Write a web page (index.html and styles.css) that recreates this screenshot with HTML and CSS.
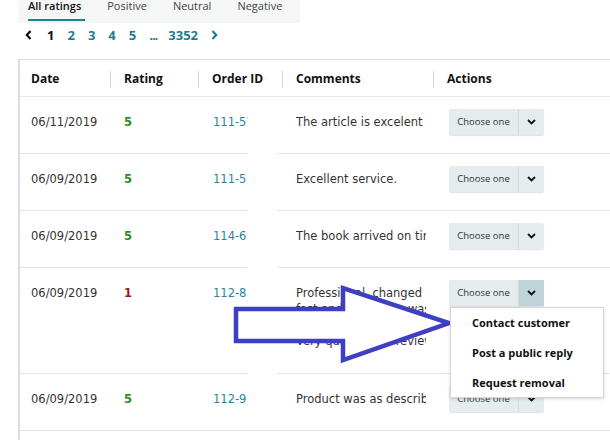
FILE: index.html
```html
<!DOCTYPE html>
<html lang="en">
<head>
    <meta charset="UTF-8">
    <title>Feedback Manager</title>
    <link rel="stylesheet" href="styles.css">
</head>
<body>
    <div class="page">
        <div class="tabs">
            <div class="tab active">All ratings</div>
            <div class="tab">Positive</div>
            <div class="tab">Neutral</div>
            <div class="tab">Negative</div>
        </div>

        <div class="pager">
            <span class="nav"><svg width="7" height="10" viewBox="0 0 7 10"><path d="M5.5 1 L1.8 5 L5.5 9" fill="none" stroke="#111" stroke-width="2.2"/></svg></span>
            <span class="current">1</span>
            <span>2</span>
            <span>3</span>
            <span>4</span>
            <span>5</span>
            <span class="dots">...</span>
            <span>3352</span>
            <span class="nav"><svg width="7" height="10" viewBox="0 0 7 10"><path d="M1.5 1 L5.2 5 L1.5 9" fill="none" stroke="#1c7d92" stroke-width="2.2"/></svg></span>
        </div>

        <div class="grid">
            <div class="row head">
                <div class="cell">Date</div>
                <div class="cell sep">Rating</div>
                <div class="cell sep">Order ID</div>
                <div class="cell sep">Comments</div>
                <div class="cell sep">Actions</div>
            </div>

            <div class="row">
                <div class="cell">06/11/2019</div>
                <div class="cell good">5</div>
                <div class="cell order"><span class="id">111-5706342</span></div>
                <div class="cell comment"><div class="line">The article is excelent</div></div>
                <div class="cell action">
                    <div class="select"><span class="label">Choose one</span><span class="caret"><svg width="9" height="6" viewBox="0 0 9 6"><path d="M1 1 L4.5 4.5 L8 1" fill="none" stroke="#111" stroke-width="1.8"/></svg></span></div>
                </div>
            </div>

            <div class="row">
                <div class="cell">06/09/2019</div>
                <div class="cell good">5</div>
                <div class="cell order"><span class="id">111-5983120</span></div>
                <div class="cell comment"><div class="line">Excellent service.</div></div>
                <div class="cell action">
                    <div class="select"><span class="label">Choose one</span><span class="caret"><svg width="9" height="6" viewBox="0 0 9 6"><path d="M1 1 L4.5 4.5 L8 1" fill="none" stroke="#111" stroke-width="1.8"/></svg></span></div>
                </div>
            </div>

            <div class="row">
                <div class="cell">06/09/2019</div>
                <div class="cell good">5</div>
                <div class="cell order"><span class="id">114-6620187</span></div>
                <div class="cell comment"><div class="line">The book arrived on time</div></div>
                <div class="cell action">
                    <div class="select"><span class="label">Choose one</span><span class="caret"><svg width="9" height="6" viewBox="0 0 9 6"><path d="M1 1 L4.5 4.5 L8 1" fill="none" stroke="#111" stroke-width="1.8"/></svg></span></div>
                </div>
            </div>

            <div class="row tall">
                <div class="cell">06/09/2019</div>
                <div class="cell bad">1</div>
                <div class="cell order"><span class="id">112-8841536</span></div>
                <div class="cell comment">
                    <div class="line">Professional, changed the item</div>
                    <div class="line">fast and the return was easy</div>
                    <div class="line">thank you for all the help</div>
                    <div class="line">Very quick, good review,&amp;</div>
                </div>
                <div class="cell action">
                    <div class="select open"><span class="label">Choose one</span><span class="caret"><svg width="9" height="6" viewBox="0 0 9 6"><path d="M1 1 L4.5 4.5 L8 1" fill="none" stroke="#111" stroke-width="1.8"/></svg></span></div>
                    <div class="menu">
                        <div class="item">Contact customer</div>
                        <div class="item">Post a public reply</div>
                        <div class="item">Request removal</div>
                    </div>
                </div>
            </div>

            <div class="row">
                <div class="cell">06/09/2019</div>
                <div class="cell good">5</div>
                <div class="cell order"><span class="id">112-9.</span></div>
                <div class="cell comment"><div class="line">Product was as described</div></div>
                <div class="cell action">
                    <div class="select"><span class="label">Choose one</span><span class="caret"><svg width="9" height="6" viewBox="0 0 9 6"><path d="M1 1 L4.5 4.5 L8 1" fill="none" stroke="#111" stroke-width="1.8"/></svg></span></div>
                </div>
            </div>

            <div class="row">
                <div class="cell">06/08/2019</div>
                <div class="cell good">5</div>
                <div class="cell order"><span class="id">113-4</span></div>
                <div class="cell comment"><div class="line">Great seller</div></div>
                <div class="cell action"></div>
            </div>
        </div>
    </div>

    <!-- tapa blanca sobre los IDs -->
    <div class="blank"></div>

    <svg class="arrow" width="610" height="440" viewBox="0 0 610 440">
        <polygon points="236,309 343,309 343,288 449,323 343,360 343,341 236,341" fill="#fff" stroke="#3f3fc6" stroke-width="4.5" stroke-linejoin="miter"/>
    </svg>
</body>
</html>
```

FILE: styles.css
```css
html,
body {
    margin: 0;
    padding: 0;
    overflow: hidden;
}

body {
    font-family: "DejaVu Sans", Verdana, sans-serif;
    font-size: 11.5px;
    color: #333;
    background-color: #fff;
    width: 610px;
    height: 440px;
    position: relative;
}

.page {
    padding-left: 18px;
}

.tabs {
    display: flex;
    gap: 22px;
    width: 282px;
    height: 23px;
    padding-left: 10px;
    background-color: #f5f6f6;
    font-family: "Open Sans", sans-serif;
    font-size: 11px;
    color: #444;
    box-sizing: border-box;
}

.tab {
    line-height: 12px;
    padding-right: 4px;
    height: 21px;
    box-sizing: border-box;
}

.tab.active {
    color: #111;
    font-weight: 600;
    border-bottom: 2px solid #1a8194;
}

.pager {
    display: flex;
    align-items: center;
    gap: 13px;
    height: 22px;
    margin-top: 1px;
    padding-left: 7px;
    font-family: "Open Sans", sans-serif;
    font-size: 13px;
    font-weight: 700;
    color: #1c7d92;
}

.pager .nav {
    display: flex;
    margin-right: 2px;
}

.pager .nav:last-child {
    margin-left: 0;
}

.pager .current {
    color: #111;
}

.pager .dots {
    letter-spacing: -1px;
    margin-right: -2px;
}

.grid {
    margin-top: 13px;
    border-left: 2px solid #ddd;
    border-top: 1px solid #ddd;
}

.row {
    display: grid;
    grid-template-columns: 90px 88px 84px 151px 1fr;
    border-bottom: 1px solid #e4e4e4;
    min-height: 56px;
}

.row.head {
    min-height: 36px;
    border-bottom: 1px solid #e8e8e8;
    font-family: "Open Sans", sans-serif;
    font-size: 12px;
    font-weight: 700;
    color: #111;
}

.row.head .cell {
    padding: 2px 0 0 14px;
    line-height: 34px;
}

.row.head .cell:first-child {
    padding-left: 11px;
}

.row.head .sep {
    background: linear-gradient(#d4d4d4, #d4d4d4) 0 11px / 1px 16px no-repeat;
}

.cell {
    padding: 17px 0 0 14px;
    line-height: 16px;
}

.row .cell:first-child {
    padding-left: 11px;
}

.good {
    color: #2c8c2c;
    font-weight: bold;
}

.bad {
    color: #a0141e;
    font-weight: bold;
}

.order {
    color: #2a86a0;
    padding-left: 15px;
}

.order .id {
    display: block;
    width: 35px;
    white-space: nowrap;
    overflow: hidden;
}

.comment {
    padding-right: 7px;
    padding-bottom: 23px;
    overflow: hidden;
}

.row.tall .comment {
    padding-bottom: 24px;
}

.line {
    white-space: nowrap;
    overflow: hidden;
}

.action {
    position: relative;
    padding-top: 12px;
    padding-left: 16px;
}

.select {
    display: inline-flex;
    height: 26px;
    background-color: #e4ecee;
    border-radius: 2px;
    box-shadow: 0 1px 1px rgba(0, 0, 0, 0.12);
    font-family: "Open Sans", sans-serif;
    font-size: 9.5px;
    color: #333;
}

.select .label {
    display: flex;
    align-items: center;
    justify-content: center;
    width: 69px;
    white-space: nowrap;
}

.select .caret {
    display: flex;
    align-items: center;
    justify-content: center;
    width: 25px;
    border-left: 1px solid #d2dcde;
}

.select.open .caret {
    background-color: #bed4d9;
}

.menu {
    position: absolute;
    top: 39px;
    left: 17px;
    width: 154px;
    height: 91px;
    background-color: #fff;
    border: 1px solid #d6d6d6;
    box-shadow: 0 1px 3px rgba(0, 0, 0, 0.15);
    padding-top: 5px;
    box-sizing: border-box;
    z-index: 5;
}

.menu .item {
    padding-left: 21px;
    height: 30px;
    line-height: 20px;
    font-family: "Open Sans", sans-serif;
    font-size: 11px;
    font-weight: 700;
    color: #0f1111;
}

.blank {
    position: absolute;
    left: 247px;
    top: 150px;
    width: 30px;
    height: 278px;
    background-color: #fff;
}

.arrow {
    position: absolute;
    left: 0;
    top: 0;
    z-index: 3;
}
```
